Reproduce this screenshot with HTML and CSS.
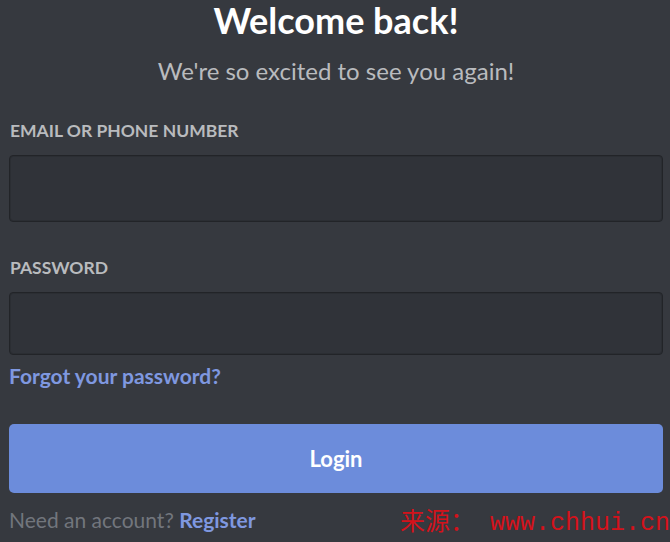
FILE: index.html
```html
<!DOCTYPE html>
<html lang="en">
<head>
  <meta charset="UTF-8" />
  <meta name="viewport" content="width=device-width, initial-scale=1" />
  <title>Login</title>
  <link rel="stylesheet" href="styles.css">
</head>
<body>

  <div class="login">
    <h1>Welcome back!</h1>
    <p class="subtitle">We're so excited to see you again!</p>

    <label class="field-label" for="email">Email or Phone Number</label>
    <input class="field" id="email" type="text" />

    <label class="field-label pw" for="password">Password</label>
    <input class="field" id="password" type="password" />

    <a class="forgot" href="#">Forgot your password?</a>

    <button class="login-btn">Login</button>

    <div class="footer">
      <span class="need">Need an account? <a href="#">Register</a></span>
      <span class="mark">来源： www.chhui.cn</span>
    </div>
  </div>

</body>
</html>
```

FILE: styles.css
```css
body {
  margin: 0;
  background: #36393f;
  font-family: Lato, 'Open Sans', sans-serif;
  height: 542px;
  overflow: hidden;
}
.login {
  display: flex;
  flex-direction: column;
  padding: 1px 7px 0 9px;
}
h1 {
  margin: 0;
  text-align: center;
  color: #fff;
  font-size: 36px;
  font-weight: 700;
  line-height: 38px;
}
.subtitle {
  margin: 17px 0 0;
  text-align: center;
  color: #b9bbbe;
  font-size: 24px;
  font-weight: 400;
  line-height: 30px;
}
.field-label {
  margin-top: 34px;
  padding-left: 1px;
  color: #b9bbbe;
  font-size: 17.5px;
  font-weight: 700;
  text-transform: uppercase;
  line-height: 22px;
}
.field-label.pw {
  margin-top: 35px;
}
.field {
  margin-top: 13px;
  height: 67px;
  box-sizing: border-box;
  background: #303339;
  border: 1px solid #222428;
  border-radius: 4px;
  box-shadow: inset 0 0 0 1px #2b2e33;
  outline: none;
}
#password {
  height: 63px;
}
.forgot {
  margin-top: 8px;
  align-self: flex-start;
  color: #7f98e0;
  font-size: 21px;
  font-weight: 700;
  line-height: 26px;
  text-decoration: none;
}
.login-btn {
  margin-top: 35px;
  height: 69px;
  background: #6c8cdb;
  color: #fff;
  font-family: inherit;
  font-size: 22px;
  font-weight: 700;
  border: none;
  border-radius: 5px;
  cursor: pointer;
}
.footer {
  margin-top: 8px;
  display: flex;
  justify-content: space-between;
  align-items: center;
}
.need {
  color: #72767d;
  font-size: 21px;
}
.need a {
  color: #7f98e0;
  font-weight: 700;
  text-decoration: none;
}
.mark {
  margin-right: -7px;
  color: #d4121b;
  font-family: 'Liberation Mono', 'Noto Sans CJK SC', monospace;
  font-size: 25px;
  white-space: pre;
}
```
